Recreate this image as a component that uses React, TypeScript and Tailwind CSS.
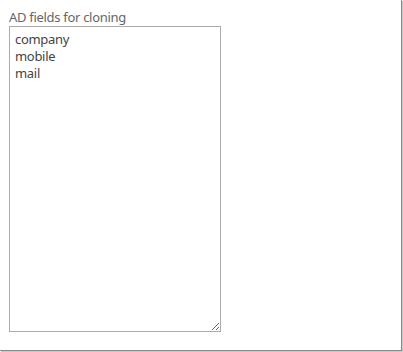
import React from "react";

export default function App() {
  return (
    <div className="w-[403px] h-[352px] bg-white">
      <div className="w-[402px] h-[351px] bg-white border-r border-b border-[#8a8a8a] shadow-[1px_1px_0_#c8c8c8] pl-[9px] pt-[9px]" style={{ fontFamily: '"Segoe UI", "Noto Sans", sans-serif' }}>
        <div className="text-[13px] leading-[17px] tracking-[-0.3px] text-[#666666]">AD fields for cloning</div>
        <textarea
          className="block w-[212px] h-[306px] border border-[#ababab] bg-white text-[13px] leading-[17px] tracking-[-0.3px] text-[#444444] px-[5px] pt-[4px] outline-none"
          style={{ fontFamily: '"Segoe UI", "Noto Sans", sans-serif' }}
          defaultValue={"company\nmobile\nmail"}
        />
      </div>
    </div>
  );
}
